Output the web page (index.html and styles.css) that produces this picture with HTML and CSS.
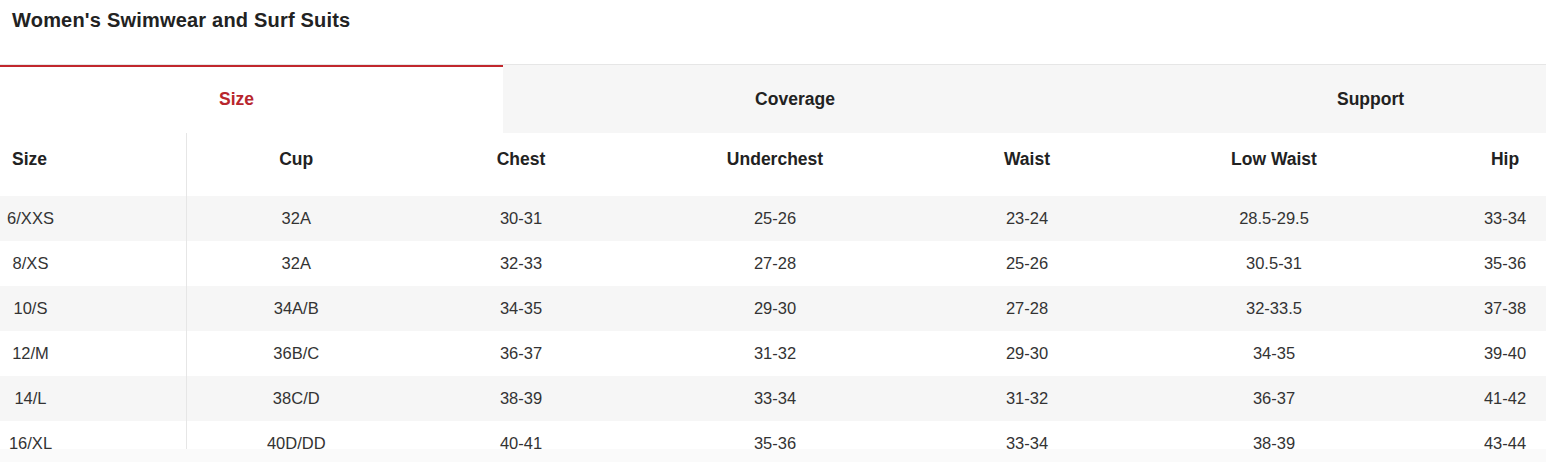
FILE: index.html
```html
<!DOCTYPE html>
<html lang="en">
<head>
<meta charset="utf-8">
<title>Women's Swimwear and Surf Suits</title>
<link rel="stylesheet" href="styles.css">
</head>
<body>
<h1 class="title">Women's Swimwear and Surf Suits</h1>
<div class="tabs">
  <div class="tab tab-size active">Size</div>
  <div class="tab tab-coverage">Coverage</div>
  <div class="tab tab-support">Support</div>
</div>
<div class="table-wrap">
  <table class="chart">
    <colgroup>
      <col class="c1"><col class="c2"><col class="c3"><col class="c4"><col class="c5"><col class="c6"><col class="c7">
    </colgroup>
    <thead>
      <tr>
        <th class="first">Size</th><th>Cup</th><th>Chest</th><th>Underchest</th><th>Waist</th><th>Low Waist</th><th class="last">Hip</th>
      </tr>
    </thead>
    <tbody>
      <tr><td class="first"><span class="sz">6/XXS</span></td><td>32A</td><td>30-31</td><td>25-26</td><td>23-24</td><td>28.5-29.5</td><td class="last">33-34</td></tr>
      <tr><td class="first"><span class="sz">8/XS</span></td><td>32A</td><td>32-33</td><td>27-28</td><td>25-26</td><td>30.5-31</td><td class="last">35-36</td></tr>
      <tr><td class="first"><span class="sz">10/S</span></td><td>34A/B</td><td>34-35</td><td>29-30</td><td>27-28</td><td>32-33.5</td><td class="last">37-38</td></tr>
      <tr><td class="first"><span class="sz">12/M</span></td><td>36B/C</td><td>36-37</td><td>31-32</td><td>29-30</td><td>34-35</td><td class="last">39-40</td></tr>
      <tr><td class="first"><span class="sz">14/L</span></td><td>38C/D</td><td>38-39</td><td>33-34</td><td>31-32</td><td>36-37</td><td class="last">41-42</td></tr>
      <tr><td class="first"><span class="sz">16/XL</span></td><td>40D/DD</td><td>40-41</td><td>35-36</td><td>33-34</td><td>38-39</td><td class="last">43-44</td></tr>
    </tbody>
  </table>
</div>
<div class="strip"></div>
</body>
</html>
```
FILE: styles.css
```css
html, body {
  margin: 0;
  padding: 0;
  background: #fff;
}
body {
  font-family: "Liberation Sans", Arial, sans-serif;
  color: #333;
  width: 1546px;
  overflow: hidden;
}
.title {
  margin: 0;
  height: 64px;
  box-sizing: border-box;
  padding: 8px 12px 0;
  font-size: 20px;
  line-height: 24px;
  font-weight: 700;
  letter-spacing: 0.2px;
  color: #222;
}
.tabs {
  display: grid;
  grid-template-columns: 503px 584px 1fr;
  border-top: 1px solid #e6e6e6;
  background: #f6f6f6;
  height: 68px;
}
.tab {
  display: flex;
  align-items: center;
  justify-content: center;
  font-size: 17.5px;
  font-weight: 700;
  color: #222;
}
.tab.active {
  background: #fff;
  color: #b8262d;
  border-top: 2px solid #c1272d;
  padding-bottom: 2px;
  padding-right: 30px;
}
.tab-support {
  padding-left: 108px;
}
.table-wrap {
  height: 316px;
  overflow: hidden;
}
.chart {
  width: 1546px;
  border-collapse: collapse;
  table-layout: fixed;
  font-size: 16.5px;
}
.c1 { width: 186px; }
.c2 { width: 220px; }
.c3 { width: 230px; }
.c4 { width: 278px; }
.c5 { width: 226px; }
.c6 { width: 268px; }
.c7 { width: 138px; }
.chart th,
.chart td {
  padding: 0;
  text-align: center;
  vertical-align: middle;
}
.chart th {
  height: 52px;
  padding-bottom: 11px;
  font-size: 17.5px;
  font-weight: 700;
  color: #222;
}
.chart td {
  height: 45px;
  color: #333;
}
.chart tbody tr:nth-child(odd) {
  background: #f6f6f6;
}
.chart .first {
  border-right: 1px solid #e6e6e6;
  text-align: left;
}
.chart th.first {
  padding-left: 12px;
}
.chart .last {
  padding-left: 56px;
}
.sz {
  display: inline-block;
  width: 61px;
  text-align: center;
}
.strip {
  height: 13px;
  background: #fafafa;
}
```
